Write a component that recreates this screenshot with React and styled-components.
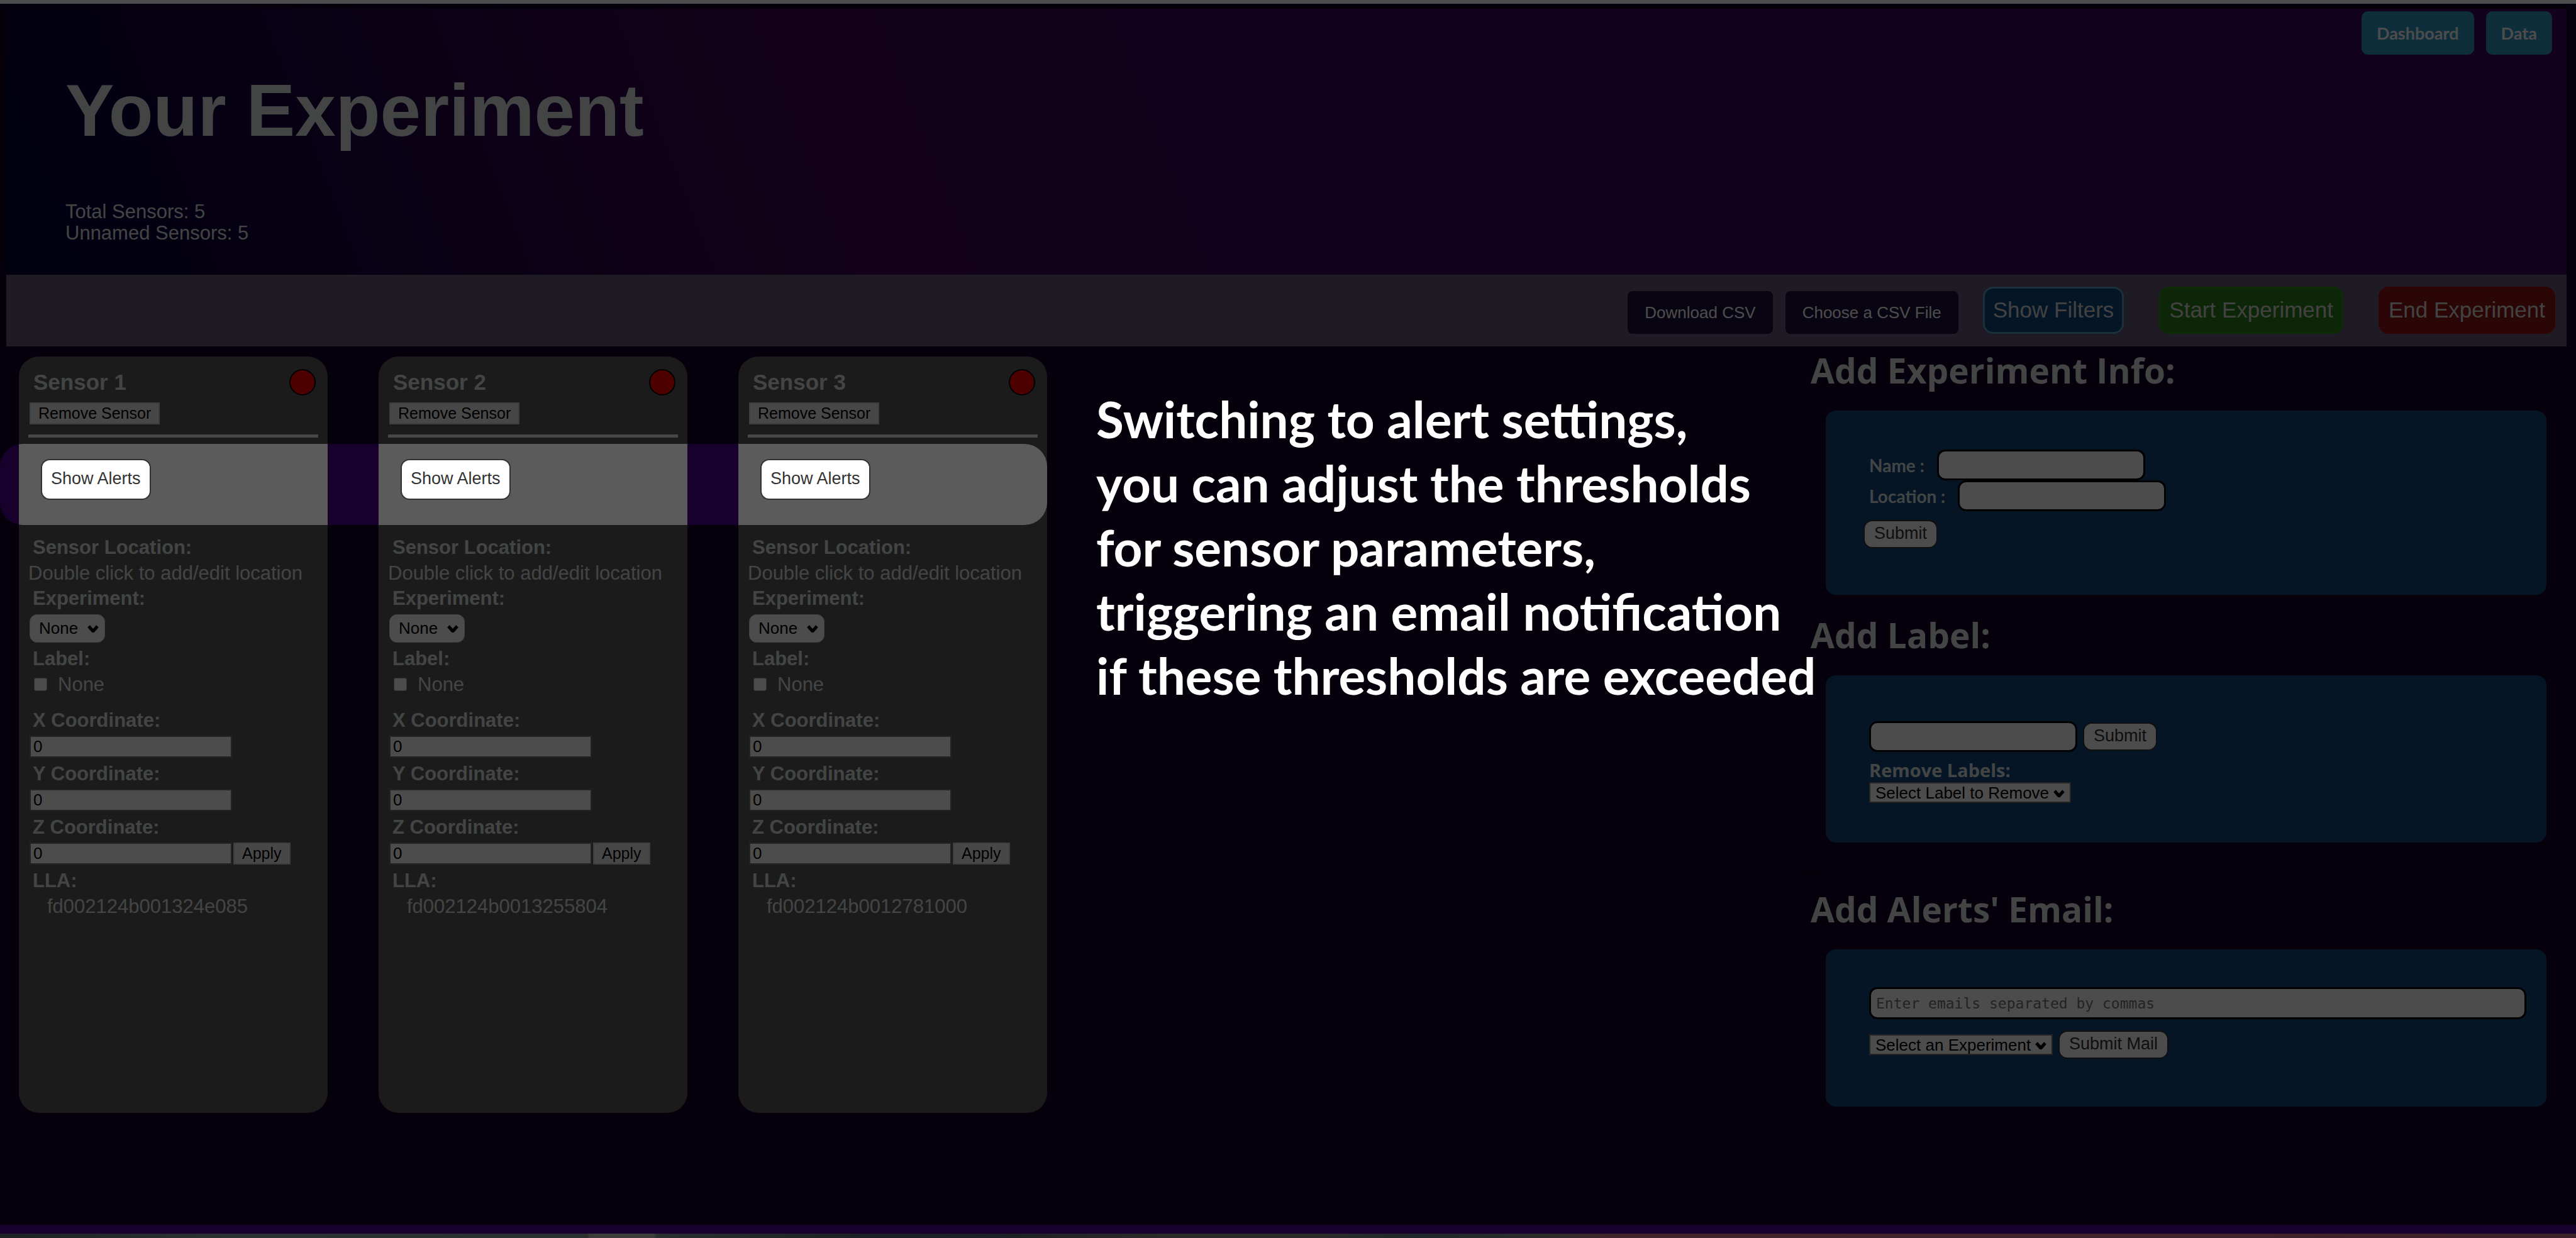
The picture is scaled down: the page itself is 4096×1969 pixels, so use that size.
import React from "react";
import styled, { createGlobalStyle, css } from "styled-components";

const GlobalStyle = createGlobalStyle`
  *, *::before, *::after { box-sizing: border-box; }
  body {
    margin: 0;
    background: #17002b;
    color: #dfe6e6;
    font-family: "Liberation Sans", Arial, sans-serif;
    font-size: 31px;
  }
  button, input, select, textarea {
    margin: 0;
    font-family: "Liberation Sans", Arial, sans-serif;
    font-size: 26px;
  }
  h1, h2, h3, p { margin: 0; }
`;

const Page = styled.div`
  position: relative;
  overflow: hidden;
  min-height: 100vh;
  display: flex;
  flex-direction: column;
  border-top: 6px solid #4c4c4c;
`;

const Content = styled.div`
  flex: 1;
  padding: 8px 15px 0 10px;
`;

const Header = styled.header`
  display: flex;
  justify-content: space-between;
  align-items: flex-start;
  height: 423px;
  padding: 4px 23px 0 94px;
  background: linear-gradient(69deg, #000035 0%, #400856 32%, #400864 50%);
`;

const Title = styled.h1`
  margin-top: 90px;
  font-size: 116px;
  line-height: 136px;
`;

const Totals = styled.p`
  margin-top: 76px;
  line-height: 34px;
`;

const Nav = styled.nav`
  display: flex;
  gap: 19px;
`;

const NavLink = styled.a`
  padding: 0 24px;
  border-radius: 10px;
  background: #3099ca;
  color: #fff;
  font-family: Lato, sans-serif;
  font-size: 27px;
  font-weight: bold;
  line-height: 69px;
  text-decoration: none;
`;

const Toolbar = styled.div`
  display: flex;
  justify-content: flex-end;
  align-items: flex-end;
  height: 114px;
  padding: 0 18px 20px;
  background: #645a78;
`;

const FileButton = styled.button`
  height: 68px;
  margin-right: 20px;
  padding: 0 27px;
  border: 0;
  border-radius: 8px;
  background: #1b0f3c;
  color: #fff;
`;

const ActionButton = styled.button`
  height: 75px;
  margin-left: ${(p) => p.$gap}px;
  padding: 0 13px 2px;
  border: 3px solid ${(p) => p.$edge};
  border-radius: 16px;
  background: ${(p) => p.$fill};
  color: #ddd;
  font-size: 35px;
`;

const Main = styled.main`
  display: flex;
  justify-content: space-between;
`;

const SensorList = styled.section`
  position: relative;
  display: flex;
  gap: 81px;
  padding: 16px 0 0 20px;
`;

const Spotlight = styled.div`
  position: absolute;
  z-index: 2;
  left: -10px;
  right: 0;
  top: 155px;
  height: 129px;
  border-radius: 36px;
  box-shadow: 0 0 0 5000px rgba(0, 0, 0, 0.7);
  pointer-events: none;
`;

const Card = styled.article`
  width: 491px;
  height: 1203px;
  padding: 20px 15px;
  border-radius: 32px;
  background: #5b5b5b;
`;

const CardHead = styled.div`
  display: flex;
  justify-content: space-between;
  height: 51px;
  padding: 0 4px 0 8px;
`;

const SensorName = styled.h2`
  font-size: 35px;
  line-height: 42px;
`;

const Status = styled.span`
  width: 42px;
  height: 42px;
  border: 2px solid #000;
  border-radius: 50%;
  background: #f00;
`;

const PlainButton = styled.button`
  height: 35px;
  margin-left: 2px;
  padding: 0 12px;
  border: 2px solid #d0d0d0;
  background: #efefef;
  color: #000;
  font-size: 25px;
  line-height: 30px;
`;

const Divider = styled.hr`
  height: 5px;
  margin: 16px 0 34px;
  border: 0;
  background: #eee;
`;

const AlertButton = styled.button`
  display: block;
  height: 65px;
  margin: 0 0 56px 20px;
  padding: 0 14px 2px;
  border: 2px solid #333;
  border-radius: 14px;
  background: #fff;
  color: #333;
  font-size: 27px;
`;

const Caption = styled.label`
  display: block;
  padding-left: 7px;
  font-size: 31px;
  font-weight: bold;
  line-height: 40px;
`;

const Value = styled.p`
  padding-left: ${(p) => p.$indent || 0}px;
  line-height: 41px;
`;

const SelectWrap = styled.span`
  position: relative;
  display: inline-flex;
`;

const Chevron = styled.svg`
  position: absolute;
  right: 10px;
  top: 50%;
  width: 18px;
  height: 12px;
  margin-top: -5px;
  fill: none;
  stroke: #000;
  stroke-width: 5;
  pointer-events: none;
`;

const RoundSelect = styled.select`
  appearance: none;
  width: 120px;
  height: 45px;
  padding: 0 0 0 14px;
  border: 1px solid #ddd;
  border-radius: 12px;
  background: #fff;
  color: #000;
`;

const FlatSelect = styled.select`
  appearance: none;
  height: 33px;
  padding: 0 32px 0 8px;
  border: 2px solid #767676;
  border-radius: 0;
  background: #fff;
  color: #000;
`;

const ExperimentField = styled.div`
  margin: 5px 0 6px 2px;
  display: flex;
`;

const CheckRow = styled.label`
  display: flex;
  align-items: center;
  gap: 17px;
  margin-bottom: 16px;
  padding-left: 9px;
  line-height: 42px;
`;

const Check = styled.input`
  appearance: none;
  width: 21px;
  height: 21px;
  border: 1px solid #999;
  border-radius: 3px;
  background: #fff;
`;

const CoordRow = styled.div`
  display: flex;
  margin: 4px 0 6px 2px;
`;

const CoordInput = styled.input`
  width: 322px;
  height: 35px;
  padding: 0 4px;
  border: 2px solid #767676;
  background: #fff;
  color: #000;
`;

const Message = styled.p`
  position: absolute;
  z-index: 3;
  left: 1733px;
  top: 64px;
  color: #fff;
  font-family: Lato, sans-serif;
  font-size: 80px;
  font-weight: bold;
  line-height: 102px;
  white-space: pre;
`;

const Forms = styled.section`
  width: 1210px;
  padding: 6px 24px 0 0;
  font-family: Lato, sans-serif;
`;

const FormTitle = styled.h2`
  padding-left: 8px;
  font-family: "Open Sans", sans-serif;
  font-size: 55px;
  line-height: 64px;
`;

const Panel = styled.form`
  height: ${(p) => p.$h}px;
  margin: 32px 8px 32px 32px;
  padding: ${(p) => p.$top}px 32px 0 69px;
  border-radius: 16px;
  background: #11467f;
  font-size: 28px;
`;

const Field = styled.div`
  display: flex;
  align-items: center;
  gap: ${(p) => p.$gap || 9}px;
  height: 49px;
  font-weight: bold;
`;

const inputBase = css`
  border: 3px solid #000;
  border-radius: 13px;
  background: #fff;
  color: #000;
`;

const TextInput = styled.input`
  ${inputBase}
  width: 331px;
  height: 49px;
`;

const EmailBox = styled.textarea`
  ${inputBase}
  display: block;
  width: 100%;
  height: 51px;
  margin-bottom: 16px;
  padding: 9px 8px;
  overflow: hidden;
  resize: none;
  font-family: "DejaVu Sans Mono", monospace;
  font-size: 23px;
  line-height: 28px;
  &::placeholder { color: #757575; opacity: 1; }
`;

const Submit = styled.button`
  height: 45px;
  margin: ${(p) => p.$margin || 0};
  padding: 0 15px 2px;
  border: 2px solid #333;
  border-radius: 14px;
  background: #fff;
  color: #333;
  font-size: 27px;
`;

const RemoveTitle = styled.label`
  display: block;
  margin-top: 12px;
  font-family: "Open Sans", sans-serif;
  font-size: 29px;
  font-weight: bold;
  line-height: 34px;
`;

const Stray = styled.p`
  height: 42px;
  color: #000;
  font-family: "Liberation Serif", serif;
  line-height: 32px;
`;

const Footer = styled.footer`
  position: relative;
  z-index: 3;
  height: 21px;
  background: #17002b;
  border-bottom: 7px solid;
  border-image: linear-gradient(90deg, #1e2222, #2d3232 9%, #2b3030 22.8%, #3d3d3b 22.9%, #3d3d3b 25.4%, #2b2f30 25.5%, #1c2024 34%, #1d2024 39%, #2d2c2c 46%, #2c2c2c 51%, #20282b 55%, #2c2c2c 60%, #42242a 63%, #3e2329) 1;
`;

function Arrow() {
  return (
    <Chevron viewBox="0 0 18 12">
      <path d="M2 2l7 8 7-8" />
    </Chevron>
  );
}

function Sensor({ index, address }) {
  const id = `sensor-${index}`;
  return (
    <Card>
      <CardHead>
        <SensorName>Sensor {index}</SensorName>
        <Status />
      </CardHead>
      <PlainButton type="button">Remove Sensor</PlainButton>
      <Divider />
      <AlertButton type="button">Show Alerts</AlertButton>
      <Caption as="h3">Sensor Location:</Caption>
      <Value>Double click to add/edit location</Value>
      <Caption htmlFor={`${id}-exp`}>Experiment:</Caption>
      <ExperimentField>
        <SelectWrap>
          <RoundSelect id={`${id}-exp`}><option>None</option></RoundSelect>
          <Arrow />
        </SelectWrap>
      </ExperimentField>
      <Caption as="h3">Label:</Caption>
      <CheckRow><Check type="checkbox" />None</CheckRow>
      {["X", "Y", "Z"].map((axis) => (
        <React.Fragment key={axis}>
          <Caption htmlFor={`${id}-${axis}`}>{axis} Coordinate:</Caption>
          <CoordRow>
            <CoordInput id={`${id}-${axis}`} defaultValue="0" />
            {axis === "Z" && <PlainButton type="button">Apply</PlainButton>}
          </CoordRow>
        </React.Fragment>
      ))}
      <Caption as="h3">LLA:</Caption>
      <Value $indent={30}>{address}</Value>
    </Card>
  );
}

const addresses = ["fd002124b001324e085", "fd002124b0013255804", "fd002124b0012781000"];

const message = `Switching to alert settings,
you can adjust the thresholds
for sensor parameters,
triggering an email notification
if these thresholds are exceeded`;

export default function App() {
  return (
    <Page>
      <GlobalStyle />
      <Content>
        <Header>
          <div>
            <Title>Your Experiment</Title>
            <Totals>Total Sensors: 5<br />Unnamed Sensors: 5</Totals>
          </div>
          <Nav>
            <NavLink href="#dashboard">Dashboard</NavLink>
            <NavLink href="#data">Data</NavLink>
          </Nav>
        </Header>
        <Toolbar>
          <FileButton type="button">Download CSV</FileButton>
          <FileButton type="button">Choose a CSV File</FileButton>
          <ActionButton type="button" $gap={19} $fill="#0f4680" $edge="#5f9fc8">Show Filters</ActionButton>
          <ActionButton type="button" $gap={56} $fill="#2c8018" $edge="#2c9010">Start Experiment</ActionButton>
          <ActionButton type="button" $gap={56} $fill="#8c1414" $edge="#a01010">End Experiment</ActionButton>
        </Toolbar>
        <Main>
          <SensorList>
            {addresses.map((address, i) => (
              <Sensor key={address} index={i + 1} address={address} />
            ))}
            <Spotlight />
            <Message>{message}</Message>
          </SensorList>
          <Forms>
            <FormTitle>Add Experiment Info:</FormTitle>
            <Panel $h={293} $top={62}>
              <Field $gap={20}><label htmlFor="name">Name :</label><TextInput id="name" /></Field>
              <Field $gap={20}><label htmlFor="location">Location :</label><TextInput id="location" /></Field>
              <Submit type="button" $margin="14px 0 0 -9px">Submit</Submit>
            </Panel>
            <FormTitle>Add Label:</FormTitle>
            <Panel $h={266} $top={73}>
              <Field><TextInput aria-label="Label" /><Submit type="button">Submit</Submit></Field>
              <RemoveTitle htmlFor="remove">Remove Labels:</RemoveTitle>
              <SelectWrap>
                <FlatSelect id="remove"><option>Select Label to Remove</option></FlatSelect>
                <Arrow />
              </SelectWrap>
            </Panel>
            <Stray>=</Stray>
            <FormTitle>Add Alerts' Email:</FormTitle>
            <Panel $h={250} $top={60}>
              <EmailBox aria-label="Emails" placeholder="Enter emails separated by commas" />
              <Field>
                <SelectWrap>
                  <FlatSelect aria-label="Experiment"><option>Select an Experiment</option></FlatSelect>
                  <Arrow />
                </SelectWrap>
                <Submit type="button">Submit Mail</Submit>
              </Field>
            </Panel>
          </Forms>
        </Main>
      </Content>
      <Footer />
    </Page>
  );
}
